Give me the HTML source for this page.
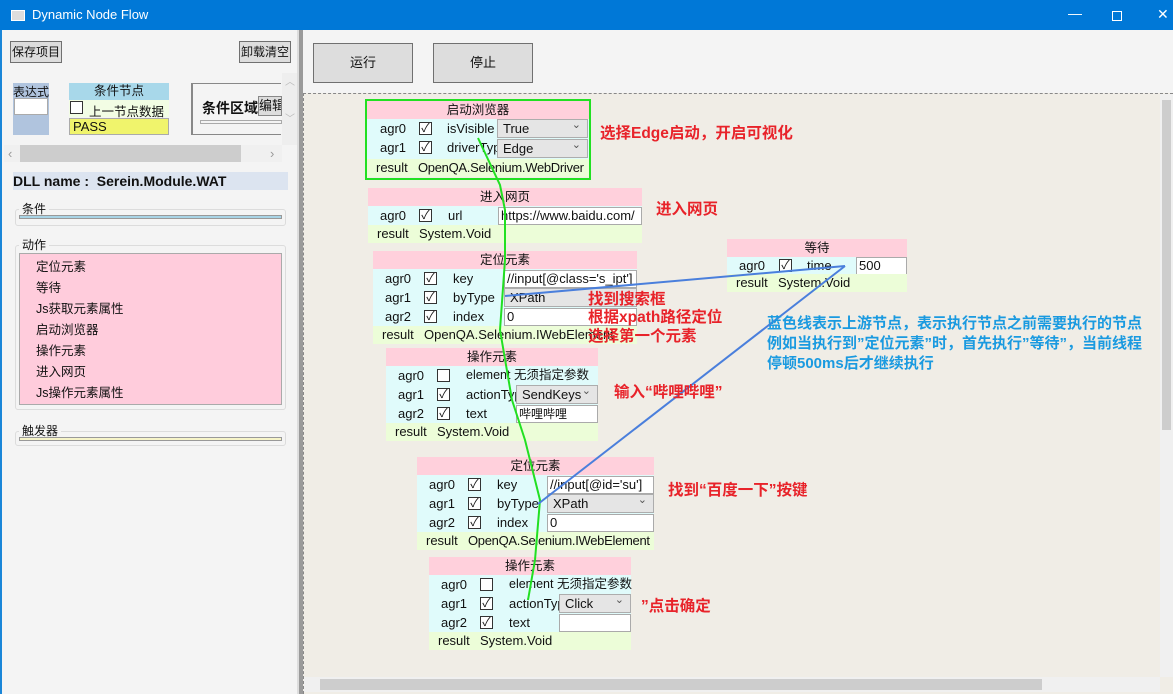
<!DOCTYPE html><html><head><meta charset="utf-8"><style>
*{box-sizing:border-box;margin:0;padding:0}
body{width:1173px;height:698px;overflow:hidden;background:#fff;font-family:"Liberation Sans","Microsoft YaHei","Noto Sans CJK SC",sans-serif;font-size:13px;color:#111;position:relative}
.a{position:absolute;white-space:nowrap}
.btn{position:absolute;background:#dddddd;border:1px solid #707070;text-align:center;font-size:13px;white-space:nowrap;overflow:hidden}
.n{position:absolute}
.n .t{background:#ffd0dc;height:18px;line-height:18px;text-align:center;font-size:12.5px}
.n .r{position:relative;height:19px;line-height:19px;background:#e0fbfb}
.n .res{position:relative;height:18px;line-height:18px;background:#ecfdd8;overflow:hidden}
.n span{position:absolute;white-space:nowrap;overflow:hidden}
.cb{position:absolute;width:13px;height:13px;border:1px solid #333;background:#fff;top:3px;font-size:12px;line-height:11px;text-align:center}
.cmb{position:absolute;top:0;height:19px;background:#e5e5e5;border:1px solid #adadad;padding-left:5px;line-height:17px}
.cmb:after{content:"⌄";position:absolute;right:6px;top:-3px;font-size:11px;color:#555}
.inp{position:absolute;top:1px;height:18px;background:#fff;border:1px solid #aaa;padding-left:2px;line-height:16px;overflow:hidden;white-space:nowrap}
.red{position:absolute;color:#e8232a;font-weight:bold;font-size:15.5px;white-space:nowrap}
.blue{position:absolute;color:#1a9ae0;font-weight:bold;font-size:15px;line-height:20px;white-space:nowrap}
</style></head><body>
<div class="a" style="left:0;top:0;width:1173px;height:30px;background:#0078d7"></div>
<div class="a" style="left:11px;top:10px;width:14px;height:11px;background:#ddd;border:1px solid #fff"></div>
<div class="a" style="left:32px;top:7px;color:#fff;font-size:13px">Dynamic Node Flow</div>
<div class="a" style="left:1068px;top:5px;color:#fff;font-size:14px">—</div>
<div class="a" style="left:1112px;top:11px;width:10px;height:10px;border:1px solid #fff"></div>
<div class="a" style="left:1157px;top:6px;color:#fff;font-size:14px">✕</div>
<div class="a" style="left:0;top:30px;width:298px;height:668px;background:#f4f4f4;border-left:2px solid #1a86d8;border-bottom:2px solid #1a86d8"></div>
<div class="btn" style="left:10px;top:41px;width:52px;height:22px;line-height:20px;font-size:12px">保存项目</div>
<div class="btn" style="left:239px;top:41px;width:52px;height:22px;line-height:20px;font-size:12px">卸载清空</div>
<div class="a" style="left:13px;top:83px;width:36px;height:52px;background:#b0c4de"></div>
<div class="a" style="left:13px;top:83px;font-size:12px">表达式</div>
<div class="a" style="left:14px;top:98px;width:34px;height:17px;background:#fff;border:1px solid #aaa"></div>
<div class="a" style="left:69px;top:83px;width:100px;height:17px;background:#a8d8ea;text-align:center;font-size:12.5px;line-height:17px">条件节点</div>
<div class="a" style="left:69px;top:100px;width:100px;height:17px;background:#f2fde4"></div>
<div class="cb" style="left:70px;top:101px;width:13px;height:13px"></div>
<div class="a" style="left:89px;top:101px;font-size:12.5px">上一节点数据</div>
<div class="a" style="left:69px;top:118px;width:100px;height:17px;background:#f0f46c;border:1px solid #aaa;padding-left:3px;line-height:15px">PASS</div>
<div class="a" style="left:191px;top:83px;width:90px;height:52px;border:1px solid #888;border-right:none;border-left:2px solid #888"></div>
<div class="a" style="left:202px;top:98px;font-weight:bold;font-size:14px">条件区域</div>
<div class="a" style="left:258px;top:96px;width:24px;height:20px;background:#ddd;border:1px solid #888;overflow:hidden;font-size:13px;line-height:18px">编辑</div>
<div class="a" style="left:200px;top:120px;width:82px;height:4px;border:1px solid #aaa"></div>
<div class="a" style="left:282px;top:73px;width:16px;height:72px;background:#eee;color:#bbb;font-size:10px;text-align:center;white-space:normal">︿<br><br><br>﹀</div>
<div class="a" style="left:4px;top:145px;width:278px;height:17px;background:#f0f0f0"></div>
<div class="a" style="left:20px;top:145px;width:221px;height:17px;background:#cdcdcd"></div>
<div class="a" style="left:8px;top:146px;color:#999">‹</div><div class="a" style="left:270px;top:146px;color:#999">›</div>
<div class="a" style="left:13px;top:172px;width:275px;height:18px;background:#dce4f0;font-weight:bold;font-size:14px;line-height:18px">DLL name :&nbsp; Serein.Module.WAT</div>
<div class="a" style="left:15px;top:209px;width:271px;height:17px;border:1px solid #dcdcdc;border-radius:3px"></div>
<div class="a" style="left:19px;top:200px;background:#f4f4f4;padding:0 3px;font-size:12px">条件</div>
<div class="a" style="left:19px;top:215px;width:263px;height:4px;background:#a8d4e6;border:1px solid #999"></div>
<div class="a" style="left:15px;top:245px;width:271px;height:165px;border:1px solid #dcdcdc;border-radius:3px"></div>
<div class="a" style="left:19px;top:236px;background:#f4f4f4;padding:0 3px;font-size:12px">动作</div>
<div class="a" style="left:19px;top:253px;width:263px;height:152px;background:#ffccdc;border:1px solid #aaa;font-size:12.5px;line-height:21px;padding:3px 0 0 16px">定位元素<br>等待<br>Js获取元素属性<br>启动浏览器<br>操作元素<br>进入网页<br>Js操作元素属性</div>
<div class="a" style="left:15px;top:431px;width:271px;height:15px;border:1px solid #dcdcdc;border-radius:3px"></div>
<div class="a" style="left:19px;top:422px;background:#f4f4f4;padding:0 3px;font-size:12px">触发器</div>
<div class="a" style="left:19px;top:437px;width:263px;height:4px;background:#f6f4c8;border:1px solid #999"></div>
<div class="a" style="left:297px;top:30px;width:6px;height:664px;background:#9a9a9a;border-left:2px solid #ddd"></div>
<div class="a" style="left:303px;top:30px;width:870px;height:64px;background:#f4f4f4"></div>
<div class="btn" style="left:313px;top:43px;width:100px;height:40px;line-height:38px">运行</div>
<div class="btn" style="left:433px;top:43px;width:100px;height:40px;line-height:38px">停止</div>
<div class="a" style="left:303px;top:93px;width:870px;height:601px;background:#f0ede6;border-top:1px dashed #888;border-left:1px dashed #888"></div>
<div class="a" style="left:1160px;top:94px;width:13px;height:583px;background:#f0f0f0"></div>
<div class="a" style="left:1162px;top:100px;width:9px;height:330px;background:#cdcdcd"></div>
<div class="a" style="left:304px;top:677px;width:856px;height:15px;background:#f0f0f0"></div>
<div class="a" style="left:320px;top:679px;width:722px;height:11px;background:#cdcdcd"></div>
<div class="a" style="left:0;top:694px;width:1173px;height:4px;background:#fff"></div>

<div class="n" style="left:367px;top:101px;width:222px">
<div class="t">启动浏览器</div>
<div class="r"><span style="left:13px">agr0</span><div class="cb" style="left:52px">✓</div><span style="left:80px">isVisible</span><div class="cmb" style="left:130px;width:91px">True</div></div>
<div class="r" style="height:21px"><span style="left:13px">agr1</span><div class="cb" style="left:52px">✓</div><span style="left:80px;width:50px">driverType</span><div class="cmb" style="left:130px;width:91px;top:1px">Edge</div></div>
<div class="res"><span style="left:9px">result</span><span style="left:51px;letter-spacing:-0.3px">OpenQA.Selenium.WebDriver</span></div>
</div>
<div class="a" style="left:365px;top:99px;width:226px;height:81px;border:2px solid #22e022"></div>
<div class="n" style="left:368px;top:188px;width:274px">
<div class="t">进入网页</div>
<div class="r"><span style="left:12px">agr0</span><div class="cb" style="left:51px">✓</div><span style="left:80px">url</span><div class="inp" style="left:130px;width:144px">https://www.baidu.com/</div></div>
<div class="res"><span style="left:9px">result</span><span style="left:51px">System.Void</span></div>
</div>
<div class="n" style="left:373px;top:251px;width:264px">
<div class="t">定位元素</div>
<div class="r"><span style="left:12px">agr0</span><div class="cb" style="left:51px">✓</div><span style="left:80px">key</span><div class="inp" style="left:131px;width:133px">//input[@class='s_ipt']</div></div>
<div class="r"><span style="left:12px">agr1</span><div class="cb" style="left:51px">✓</div><span style="left:80px">byType</span><div class="cmb" style="left:131px;width:133px">XPath</div></div>
<div class="r"><span style="left:12px">agr2</span><div class="cb" style="left:51px">✓</div><span style="left:80px">index</span><div class="inp" style="left:131px;width:133px">0</div></div>
<div class="res"><span style="left:9px">result</span><span style="left:51px;width:213px">OpenQA.Selenium.IWebElement</span></div>
</div>
<div class="n" style="left:386px;top:348px;width:212px">
<div class="t">操作元素</div>
<div class="r"><span style="left:12px">agr0</span><div class="cb" style="left:51px"></div><span style="left:80px;font-size:12.5px">element 无须指定参数</span></div>
<div class="r"><span style="left:12px">agr1</span><div class="cb" style="left:51px">✓</div><span style="left:80px;width:50px">actionType</span><div class="cmb" style="left:130px;width:82px">SendKeys</div></div>
<div class="r"><span style="left:12px">agr2</span><div class="cb" style="left:51px">✓</div><span style="left:80px">text</span><div class="inp" style="left:130px;width:82px;font-size:12px">哔哩哔哩</div></div>
<div class="res"><span style="left:9px">result</span><span style="left:51px">System.Void</span></div>
</div>
<div class="n" style="left:727px;top:239px;width:180px">
<div class="t">等待</div>
<div class="r" style="height:17px;line-height:17px"><span style="left:12px">agr0</span><div class="cb" style="left:52px;top:2px">✓</div><span style="left:80px">time</span><div class="inp" style="left:129px;width:51px;top:0">500</div></div>
<div class="res"><span style="left:9px">result</span><span style="left:51px">System.Void</span></div>
</div>
<div class="n" style="left:417px;top:457px;width:237px">
<div class="t">定位元素</div>
<div class="r"><span style="left:12px">agr0</span><div class="cb" style="left:51px">✓</div><span style="left:80px">key</span><div class="inp" style="left:130px;width:107px">//input[@id='su']</div></div>
<div class="r"><span style="left:12px">agr1</span><div class="cb" style="left:51px">✓</div><span style="left:80px">byType</span><div class="cmb" style="left:130px;width:107px">XPath</div></div>
<div class="r"><span style="left:12px">agr2</span><div class="cb" style="left:51px">✓</div><span style="left:80px">index</span><div class="inp" style="left:130px;width:107px">0</div></div>
<div class="res"><span style="left:9px">result</span><span style="left:51px;letter-spacing:-0.3px">OpenQA.Selenium.IWebElement</span></div>
</div>
<div class="n" style="left:429px;top:557px;width:202px">
<div class="t">操作元素</div>
<div class="r"><span style="left:12px">agr0</span><div class="cb" style="left:51px"></div><span style="left:80px;font-size:12.5px">element 无须指定参数</span></div>
<div class="r"><span style="left:12px">agr1</span><div class="cb" style="left:51px">✓</div><span style="left:80px;width:50px">actionType</span><div class="cmb" style="left:130px;width:72px">Click</div></div>
<div class="r"><span style="left:12px">agr2</span><div class="cb" style="left:51px">✓</div><span style="left:80px">text</span><div class="inp" style="left:130px;width:72px"></div></div>
<div class="res"><span style="left:9px">result</span><span style="left:51px">System.Void</span></div>
</div>
<svg class="a" style="left:0;top:0" width="1173" height="698">
<polyline points="478,138 500,185 505,210 505,260 500,330 512,400 525,440 540,500 535,560 528,600" fill="none" stroke="#22e022" stroke-width="2"/>
<line x1="505" y1="296" x2="845" y2="266" stroke="#4a7fdc" stroke-width="2"/>
<line x1="538" y1="504" x2="845" y2="266" stroke="#4a7fdc" stroke-width="2"/>
</svg>
<div class="red" style="left:600px;top:121px">选择Edge启动，开启可视化</div>
<div class="red" style="left:656px;top:197px">进入网页</div>
<div class="red" style="left:588px;top:287px">找到搜索框</div>
<div class="red" style="left:588px;top:305px">根据xpath路径定位</div>
<div class="red" style="left:588px;top:324px">选择第一个元素</div>
<div class="red" style="left:614px;top:380px">输入“哔哩哔哩”</div>
<div class="red" style="left:668px;top:478px">找到“百度一下”按键</div>
<div class="red" style="left:641px;top:594px">”点击确定</div>
<div class="blue" style="left:767px;top:314px">蓝色线表示上游节点，表示执行节点之前需要执行的节点<br>例如当执行到”定位元素”时，首先执行”等待”，当前线程<br>停顿500ms后才继续执行</div>
</body></html>
